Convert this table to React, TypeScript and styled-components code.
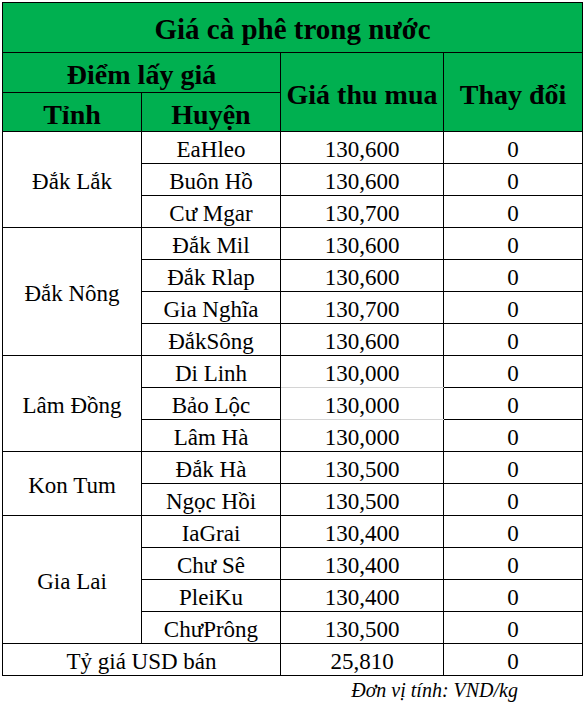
import React from 'react';
import styled, { createGlobalStyle } from 'styled-components';

const GlobalStyle = createGlobalStyle`
  body {
    margin: 0;
    background: #fff;
    font-family: "Liberation Serif", "Times New Roman", serif;
    color: #000;
  }
`;

const Page = styled.div`
  padding: 2px 0 0 2px;
  width: 581px;
`;

const Table = styled.table`
  border-collapse: collapse;
  table-layout: fixed;
  width: 580px;
`;

const HeadCell = styled.th<{ $h?: number }>`
  background: #00b050;
  border: 1px solid #000;
  font-size: 28px;
  font-weight: bold;
  text-align: center;
  vertical-align: middle;
  padding: 5px 0 0;
  line-height: 1;
  height: ${(p) => (p.$h ? p.$h - 6 : 26)}px;
`;

const Title = styled(HeadCell)`
  font-size: 29px;
  padding-top: 3px;
  height: ${(p) => (p.$h ? p.$h - 4 : 26)}px;
`;

const Row = styled.tr`
  height: 32px;
`;

const Cell = styled.td<{ $softBottom?: boolean }>`
  border: 1px solid #000;
  ${(p) => (p.$softBottom ? 'border-bottom-color: #d4d4d4;' : '')}
  font-size: 23px;
  text-align: center;
  vertical-align: middle;
  padding: 4px 0 0;
  line-height: 1;
  height: 27px;
  white-space: nowrap;
`;

const Note = styled.div`
  width: 580px;
  box-sizing: border-box;
  padding: 2px 64px 0 0;
  text-align: right;
  font-size: 20px;
  font-style: italic;
  line-height: 24px;
`;

type District = { name: string; price: string; soft?: boolean };
type Province = { name: string; districts: District[] };

const data: Province[] = [
  {
    name: 'Đắk Lắk',
    districts: [
      { name: 'EaHleo', price: '130,600' },
      { name: 'Buôn Hồ', price: '130,600' },
      { name: 'Cư Mgar', price: '130,700' },
    ],
  },
  {
    name: 'Đắk Nông',
    districts: [
      { name: 'Đắk Mil', price: '130,600' },
      { name: 'Đắk Rlap', price: '130,600' },
      { name: 'Gia Nghĩa', price: '130,700' },
      { name: 'ĐắkSông', price: '130,600' },
    ],
  },
  {
    name: 'Lâm Đồng',
    districts: [
      { name: 'Di Linh', price: '130,000', soft: true },
      { name: 'Bảo Lộc', price: '130,000', soft: true },
      { name: 'Lâm Hà', price: '130,000' },
    ],
  },
  {
    name: 'Kon Tum',
    districts: [
      { name: 'Đắk Hà', price: '130,500' },
      { name: 'Ngọc Hồi', price: '130,500' },
    ],
  },
  {
    name: 'Gia Lai',
    districts: [
      { name: 'IaGrai', price: '130,400' },
      { name: 'Chư Sê', price: '130,400' },
      { name: 'PleiKu', price: '130,400' },
      { name: 'ChưPrông', price: '130,500' },
    ],
  },
];

export default function App() {
  return (
    <>
      <GlobalStyle />
      <Page>
        <Table>
          <colgroup>
            <col style={{ width: 139 }} />
            <col style={{ width: 139 }} />
            <col style={{ width: 163 }} />
            <col style={{ width: 139 }} />
          </colgroup>
          <thead>
            <tr>
              <Title colSpan={4} $h={50}>
                Giá cà phê trong nước
              </Title>
            </tr>
            <tr>
              <HeadCell colSpan={2} $h={40}>
                Điểm lấy giá
              </HeadCell>
              <HeadCell rowSpan={2}>Giá thu mua</HeadCell>
              <HeadCell rowSpan={2}>Thay đổi</HeadCell>
            </tr>
            <tr>
              <HeadCell $h={39}>Tỉnh</HeadCell>
              <HeadCell $h={39}>Huyện</HeadCell>
            </tr>
          </thead>
          <tbody>
            {data.map((prov) =>
              prov.districts.map((d, i) => (
                <Row key={prov.name + d.name}>
                  {i === 0 && <Cell rowSpan={prov.districts.length}>{prov.name}</Cell>}
                  <Cell>{d.name}</Cell>
                  <Cell $softBottom={d.soft}>{d.price}</Cell>
                  <Cell>0</Cell>
                </Row>
              ))
            )}
            <Row>
              <Cell colSpan={2}>Tỷ giá USD bán</Cell>
              <Cell>25,810</Cell>
              <Cell>0</Cell>
            </Row>
          </tbody>
        </Table>
        <Note>Đơn vị tính: VND/kg</Note>
      </Page>
    </>
  );
}
